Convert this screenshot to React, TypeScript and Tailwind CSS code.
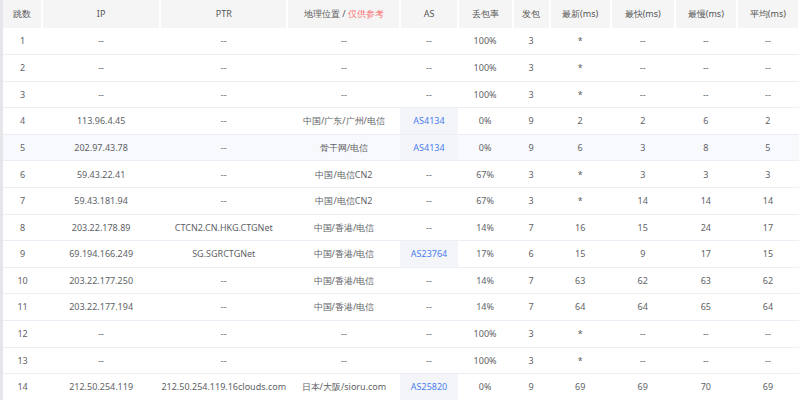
const cols = [39, 118, 127, 113, 57, 55, 37, 61, 64, 62, 62]
const heads = ["跳数", "IP", "PTR", "", "AS", "丢包率", "发包", "最新(ms)", "最快(ms)", "最慢(ms)", "平均(ms)"]

type Row = [string, string, string, string, string, string, string, string, string, string, string]
const rows: Row[] = [
  ["1", "--", "--", "--", "--", "100%", "3", "*", "--", "--", "--"],
  ["2", "--", "--", "--", "--", "100%", "3", "*", "--", "--", "--"],
  ["3", "--", "--", "--", "--", "100%", "3", "*", "--", "--", "--"],
  ["4", "113.96.4.45", "--", "中国/广东/广州/电信", "AS4134", "0%", "9", "2", "2", "6", "2"],
  ["5", "202.97.43.78", "--", "骨干网/电信", "AS4134", "0%", "9", "6", "3", "8", "5"],
  ["6", "59.43.22.41", "--", "中国/电信CN2", "--", "67%", "3", "*", "3", "3", "3"],
  ["7", "59.43.181.94", "--", "中国/电信CN2", "--", "67%", "3", "*", "14", "14", "14"],
  ["8", "203.22.178.89", "CTCN2.CN.HKG.CTGNet", "中国/香港/电信", "--", "14%", "7", "16", "15", "24", "17"],
  ["9", "69.194.166.249", "SG.SGRCTGNet", "中国/香港/电信", "AS23764", "17%", "6", "15", "9", "17", "15"],
  ["10", "203.22.177.250", "--", "中国/香港/电信", "--", "14%", "7", "63", "62", "63", "62"],
  ["11", "203.22.177.194", "--", "中国/香港/电信", "--", "14%", "7", "64", "64", "65", "64"],
  ["12", "--", "--", "--", "--", "100%", "3", "*", "--", "--", "--"],
  ["13", "--", "--", "--", "--", "100%", "3", "*", "--", "--", "--"],
  ["14", "212.50.254.119", "212.50.254.119.16clouds.com", "日本/大阪/sioru.com", "AS25820", "0%", "9", "69", "69", "70", "69"],
]

export default function App() {
  return (
    <div className="h-[400px] w-[800px] overflow-hidden bg-white border-l-[3px] border-[#e4e6ea] font-['Microsoft_YaHei','Noto_Sans_CJK_SC',sans-serif] text-[9px] text-[#606266]">
      <table className="w-[797px] table-fixed border-collapse">
        <colgroup>
          {cols.map((w, i) => (
            <col key={i} style={{ width: w }} />
          ))}
        </colgroup>
        <thead>
          <tr className="h-[28px] bg-[#f5f5f5]">
            {heads.map((h, i) => (
              <th key={i} className="border-r-2 border-white font-normal text-center text-[#555]">
                {i === 3 ? (
                  <>
                    地理位置 / <span className="text-[#f56c6c]">仅供参考</span>
                  </>
                ) : (
                  h
                )}
              </th>
            ))}
          </tr>
        </thead>
        <tbody>
          {rows.map((r, ri) => (
            <tr key={ri} className={`h-[26.6px] border-b border-[#ebeef5] ${ri === 4 ? "bg-[#f8f9fc]" : ""}`}>
              {r.map((c, ci) => {
                const link = ci === 4 && c !== "--"
                return (
                  <td
                    key={ci}
                    className={`text-center whitespace-nowrap ${link ? "bg-[#f3f5f9] text-[#4a7cf0]" : ""}`}
                  >
                    {c}
                  </td>
                )
              })}
            </tr>
          ))}
        </tbody>
      </table>
    </div>
  )
}
